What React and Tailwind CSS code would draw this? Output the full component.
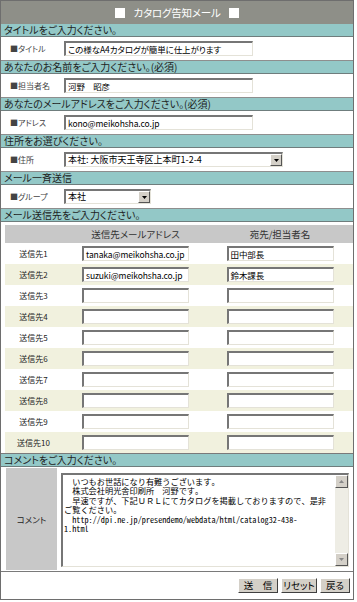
import React from "react";

function Sec({ children }) {
  return (
    <div className="h-[13px] bg-[#93c8c7] border-b border-[#6f7d7d] pl-[3px] text-[10px] leading-[12px] text-[#1e1e1e] whitespace-nowrap">
      {children}
    </div>
  );
}

function Row({ label, children }) {
  return (
    <div className="h-[24px] bg-white border-b border-[#8e8e8e] flex items-center">
      <div className="w-[63px] pl-[9px] text-[8px] leading-[10px] text-[#444] whitespace-nowrap">
        ■{label}
      </div>
      {children}
    </div>
  );
}

function Field({ w, value }) {
  return (
    <div
      className="h-[15px] bg-white border-t-2 border-l-2 border-b border-r border-t-[#767676] border-l-[#767676] border-b-[#e4e2d8] border-r-[#e4e2d8] pl-[2px] text-[8.5px] leading-[12px] tracking-[-0.1px] text-black whitespace-nowrap overflow-hidden"
      style={{ width: w }}
    >
      {value}
    </div>
  );
}

function Select({ w, value }) {
  return (
    <div
      className="h-[15px] bg-white border-t-2 border-l-2 border-b border-r border-t-[#767676] border-l-[#767676] border-b-[#e4e2d8] border-r-[#e4e2d8] flex items-stretch"
      style={{ width: w }}
    >
      <div className="flex-1 pl-[2px] text-[9px] leading-[12px] text-black whitespace-nowrap overflow-hidden">
        {value}
      </div>
      <div className="w-[12px] bg-[#d4d0c8] border border-t-white border-l-white border-b-[#555] border-r-[#555] flex items-center justify-center">
        <svg width="5" height="3" viewBox="0 0 5 3">
          <polygon points="0,0 5,0 2.5,3" fill="#000" />
        </svg>
      </div>
    </div>
  );
}

function Btn({ w, children }) {
  return (
    <div
      className="h-[15px] bg-[#d4d0c8] border border-t-white border-l-white border-b-[#404040] border-r-[#404040] flex items-center justify-center text-[9.5px] leading-[12px] text-black whitespace-nowrap"
      style={{ width: w }}
    >
      {children}
    </div>
  );
}

const recipients = [
  ["tanaka@meikohsha.co.jp", "田中部長"],
  ["suzuki@meikohsha.co.jp", "鈴木課長"],
  ["", ""],
  ["", ""],
  ["", ""],
  ["", ""],
  ["", ""],
  ["", ""],
  ["", ""],
  ["", ""],
];

const commentLines = [
  "　いつもお世話になり有難うございます。",
  "　株式会社明光舎印刷所　河野です。",
  "　早速ですが、下記ＵＲＬにてカタログを掲載しておりますので、是非",
  "ご覧ください。",
  "  http://dpi.ne.jp/presendemo/webdata/html/catalog32-438-",
  "1.html",
];

export default function App() {
  return (
    <div className="w-[357px] h-[602px] bg-white font-['Noto_Sans_CJK_JP',sans-serif] [font-feature-settings:'palt']">
      <div className="w-[354px] h-[600px] border border-[#6e6e6e] flex flex-col">
        <div className="h-[23px] bg-[#8e8f88] flex items-center justify-center gap-[7px] text-white text-[10.5px] leading-[14px]">
          <span className="w-[10px] h-[10px] bg-white inline-block" />
          <span className="px-[1px] tracking-[-0.2px]">カタログ告知メール</span>
          <span className="w-[10px] h-[10px] bg-white inline-block" />
        </div>

        <Sec>タイトルをご入力ください。</Sec>
        <Row label="タイトル">
          <Field w={189} value="この様なA4カタログが簡単に仕上がります" />
        </Row>

        <Sec>あなたのお名前をご入力ください。(必須)</Sec>
        <Row label="担当者名">
          <Field w={189} value="河野　昭彦" />
        </Row>

        <Sec>あなたのメールアドレスをご入力ください。(必須)</Sec>
        <Row label="アドレス">
          <Field w={189} value="kono@meikohsha.co.jp" />
        </Row>

        <Sec>住所をお選びください。</Sec>
        <Row label="住所">
          <Select w={219} value="本社: 大阪市天王寺区上本町1-2-4" />
        </Row>

        <Sec>メール一斉送信</Sec>
        <Row label="グループ">
          <Select w={87} value="本社" />
        </Row>

        <Sec>メール送信先をご入力ください。</Sec>
        <div className="h-[232px] bg-white border-b border-[#7a7a7a] pl-[4px] pt-[3px]">
          <div className="grid grid-cols-[57px_147px_142px] h-[18px] bg-[#c8c8c8] items-center text-[9.5px] leading-[12px] text-[#333]">
            <div />
            <div className="text-center">送信先メールアドレス</div>
            <div className="text-center">宛先/担当者名</div>
          </div>
          {recipients.map((r, i) => (
            <div
              key={i}
              className={
                i % 2 === 0
                  ? "grid grid-cols-[57px_147px_142px] h-[21px] bg-white items-center"
                  : "grid grid-cols-[57px_147px_142px] h-[21px] bg-[#f1f1de] items-center"
              }
            >
              <div className="text-center text-[8px] leading-[10px] text-[#222]">
                送信先{i + 1}
              </div>
              <div className="flex justify-center">
                <Field w={107} value={r[0]} />
              </div>
              <div className="flex justify-center">
                <Field w={107} value={r[1]} />
              </div>
            </div>
          ))}
        </div>

        <Sec>コメントをご入力ください。</Sec>
        <div className="h-[105px] bg-white border-b border-[#7a7a7a] flex items-start">
          <div className="ml-[5px] mt-[1px] w-[51px] h-[102px] bg-[#c8c8c8] flex items-center justify-center text-[8.5px] leading-[10px] text-[#222]">
            コメント
          </div>
          <div className="ml-[4px] mt-[6px] w-[288px] h-[94px] bg-white border-t-2 border-l-2 border-b border-r border-t-[#767676] border-l-[#767676] border-b-[#e4e2d8] border-r-[#e4e2d8] flex">
            <div className="flex-1 pl-[1px] pt-[2px] font-['Noto_Sans_Mono_CJK_JP','Noto_Sans_CJK_JP',monospace] [font-feature-settings:normal] text-[8.2px] leading-[9.4px] text-black whitespace-pre overflow-hidden">
              {commentLines.join("\n")}
            </div>
            <div className="w-[13px] bg-[#eeede5] flex flex-col justify-between">
              <div className="h-[13px] bg-[#d4d0c8] border border-t-white border-l-white border-b-[#555] border-r-[#555] flex items-center justify-center">
                <svg width="5" height="3" viewBox="0 0 5 3">
                  <polygon points="0,3 5,3 2.5,0" fill="#888" />
                </svg>
              </div>
              <div className="h-[13px] bg-[#d4d0c8] border border-t-white border-l-white border-b-[#555] border-r-[#555] flex items-center justify-center">
                <svg width="5" height="3" viewBox="0 0 5 3">
                  <polygon points="0,0 5,0 2.5,3" fill="#888" />
                </svg>
              </div>
            </div>
          </div>
        </div>

        <div className="h-[26px] bg-white flex items-center justify-end gap-[3px] pr-[3px]">
          <Btn w={40}>送　信</Btn>
          <Btn w={36}>リセット</Btn>
          <Btn w={30}>戻る</Btn>
        </div>
      </div>
    </div>
  );
}
